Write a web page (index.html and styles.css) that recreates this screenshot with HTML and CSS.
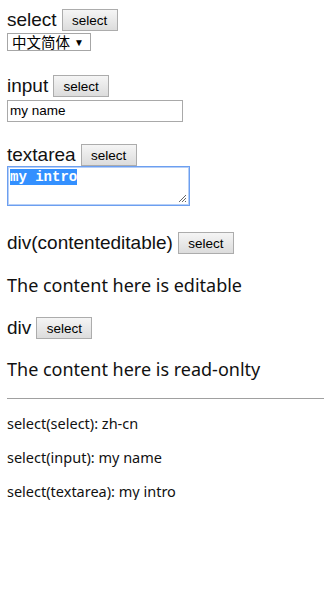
FILE: index.html
```html
<!DOCTYPE html>
<html>
<head>
<meta charset="utf-8">
<link rel="stylesheet" href="styles.css">
</head>
<body>
<div class="page">
  <div class="head h1"><span class="lbl">select</span><button class="btn">select</button></div>
  <div class="sel"><span class="sel-text">中文简体</span><span class="arrow">▼</span></div>

  <div class="head h2"><span class="lbl">input</span><button class="btn">select</button></div>
  <div class="inp">my name</div>

  <div class="head h3"><span class="lbl">textarea</span><button class="btn">select</button></div>
  <div class="ta"><span class="hl">my intro</span>
    <svg class="grip" width="9" height="9" viewBox="0 0 9 9"><path d="M8 1L1 8M8 4L4 8M8 7L7 8" stroke="#666" stroke-width="1"/></svg>
  </div>

  <div class="head h4"><span class="lbl">div(contenteditable)</span><button class="btn">select</button></div>
  <div class="txt t1">The content here is editable</div>

  <div class="head h5"><span class="lbl">div</span><button class="btn">select</button></div>
  <div class="txt t2">The content here is read-onlty</div>

  <hr class="rule">
  <p class="out o1">select(select): zh-cn</p>
  <p class="out">select(input): my name</p>
  <p class="out">select(textarea): my intro</p>
</div>
</body>
</html>
```
FILE: styles.css
```css
html, body { margin: 0; padding: 0; background: #fff; }
.page {
  padding: 0 4px 0 7px;
  display: flex;
  flex-direction: column;
  align-items: flex-start;
  color: #000;
}
.head { display: flex; align-items: center; height: 22px; gap: 5px; }
.lbl { font-family: "Liberation Sans", Arial, sans-serif; font-size: 19px; line-height: 22px; color: #111; }
.btn {
  font-family: "Liberation Sans", Arial, sans-serif;
  font-size: 13.5px;
  height: 22px;
  width: 56px;
  padding: 0;
  margin: 0;
  border: 1px solid #acacac;
  border-radius: 0;
  background: linear-gradient(#f5f5f5, #dcdcdc);
  color: #000;
}
.h1 { margin-top: 9px; }
.sel {
  margin-top: 2px;
  width: 84px; height: 18px;
  box-sizing: border-box;
  border: 1px solid #a6a6a6;
  display: flex; align-items: center;
  padding-left: 4px;
  font-family: "Liberation Sans", "Noto Sans CJK SC", sans-serif;
  font-size: 13px;
}
.sel-text { font-family: "Noto Sans CJK SC", sans-serif; font-size: 14.5px; line-height: 16px; }
.arrow { font-size: 10px; margin-left: 4px; }
.h2 { margin-top: 24px; }
.inp {
  margin-top: 3px;
  width: 176px; height: 22px;
  box-sizing: border-box;
  border: 1px solid #a9a9a9;
  padding: 0 2px;
  font-family: "Liberation Sans", Arial, sans-serif;
  font-size: 13.5px;
  line-height: 20px;
}
.h3 { margin-top: 22px; }
.ta {
  position: relative;
  width: 183px; height: 40px;
  box-sizing: border-box;
  border: 1px solid #6c9ff0;
  box-shadow: 0 0 0 1px #b6cff7 inset;
  padding: 3px 2px;
  font-family: "Liberation Mono", "DejaVu Sans Mono", monospace;
  font-size: 14px;
  font-weight: bold;
  line-height: 15px;
}
.hl { background: #3390ff; color: #fff; }
.grip { position: absolute; right: 2px; bottom: 2px; }
.h4 { margin-top: 26px; }
.txt {
  font-family: "Noto Sans", sans-serif;
  font-size: 18px;
  line-height: 24px;
  color: #111;
}
.t1 { margin-top: 19px; }
.h5 { margin-top: 20px; }
.t2 { margin-top: 18px; }
.rule {
  align-self: stretch;
  margin: 17px 0 0 0;
  border: 0;
  border-top: 1px solid #a0a0a0;
  height: 0;
}
.out {
  font-family: "Noto Sans", sans-serif;
  font-size: 14.5px;
  line-height: 18px;
  margin: 0;
  margin-top: 16px;
  color: #111;
}
.o1 { margin-top: 15px; }
```
